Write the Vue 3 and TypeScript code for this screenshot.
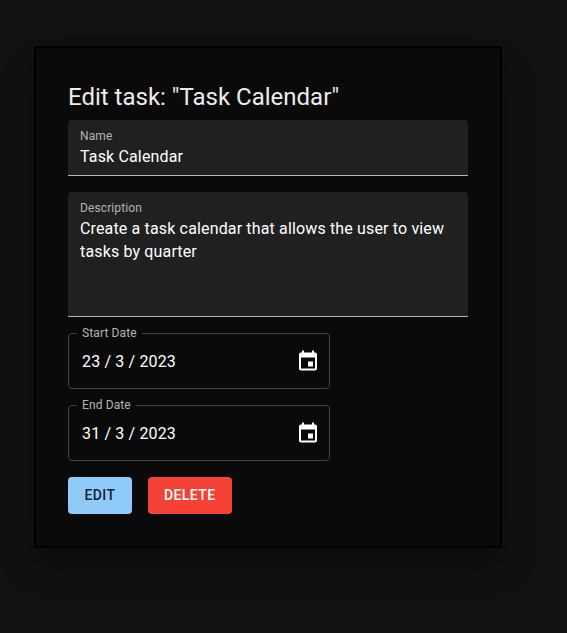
<script setup lang="ts">
import { reactive, ref } from 'vue'

interface DateField {
  id: string
  label: string
  value: string
}

const title = ref('Task Calendar')
const name = ref('Task Calendar')
const description = ref('Create a task calendar that allows the user to view tasks by quarter')
const dates = reactive<DateField[]>([
  { id: 'start', label: 'Start Date', value: '23 / 3 / 2023' },
  { id: 'end', label: 'End Date', value: '31 / 3 / 2023' },
])
</script>

<template>
  <div class="backdrop">
    <form class="modal" @submit.prevent>
      <h2 class="title">Edit task: "{{ title }}"</h2>

      <div class="filled">
        <label class="label" for="name">Name</label>
        <input id="name" v-model="name" class="control" type="text" />
      </div>

      <div class="filled">
        <label class="label" for="description">Description</label>
        <textarea id="description" v-model="description" class="control" rows="4" spellcheck="false"></textarea>
      </div>

      <fieldset v-for="field in dates" :key="field.id" class="outlined">
        <legend class="legend">{{ field.label }}</legend>
        <div class="date-row">
          <input v-model="field.value" class="control" type="text" :aria-label="field.label" />
          <button class="icon-button" type="button" aria-label="Choose date">
            <svg viewBox="0 -0.5 24 24" width="24" height="24">
              <path
                fill="currentColor"
                d="M17 12h-5v5h5v-5zM16 1v2H8V1H6v2H5c-1.11 0-1.99.9-1.99 2L3 19c0 1.1.89 2 2 2h14c1.1 0 2-.9 2-2V5c0-1.1-.9-2-2-2h-1V1h-2zm3 18H5V8h14v11z"
              />
            </svg>
          </button>
        </div>
      </fieldset>

      <div class="actions">
        <button class="button primary" type="submit">Edit</button>
        <button class="button danger" type="button">Delete</button>
      </div>
    </form>
  </div>
</template>

<style>
body {
  background: #121212;
}
</style>

<style scoped>
.backdrop {
  box-sizing: border-box;
  height: 633px;
  padding: 46px 65px 0 34px;
  overflow: hidden;
  background: #121212;
  color: #fff;
  font-family: Roboto, 'Liberation Sans', sans-serif;
}

.modal {
  box-sizing: border-box;
  display: flex;
  flex-direction: column;
  height: 502px;
  padding: 32px;
  border: 2px solid #000;
  background: #0a0a0a;
  box-shadow:
    0 11px 15px -7px rgba(0, 0, 0, 0.2),
    0 24px 36px 1px rgba(0, 0, 0, 0.12),
    0 9px 42px 5px rgba(0, 0, 0, 0.11);
}

.title {
  margin: 0 0 6px;
  color: #ececec;
  font-size: 24px;
  font-weight: 400;
  line-height: 34px;
}

.filled {
  display: flex;
  flex-direction: column;
  box-sizing: border-box;
  margin-bottom: 16px;
  padding: 7px 12px 7px;
  border-bottom: 1px solid #b5b5b5;
  border-radius: 4px 4px 0 0;
  background: #202020;
}

.label {
  height: 18px;
  color: #b4b4b4;
  font-size: 12px;
  line-height: 19px;
  letter-spacing: 0.1125px;
}

.control {
  display: block;
  box-sizing: border-box;
  width: 100%;
  min-width: 0;
  height: 23px;
  margin: 0;
  padding: 0;
  border: 0;
  outline: 0;
  background: none;
  color: #fff;
  font: 400 16px/23px Roboto, 'Liberation Sans', sans-serif;
  letter-spacing: 0.15px;
}

textarea.control {
  height: 92px;
  resize: none;
  overflow: hidden;
}

.outlined {
  box-sizing: border-box;
  width: 262px;
  height: 61px;
  min-width: 0;
  margin: -5px 0 16px;
  padding: 0 8px;
  border: 1px solid #444;
  border-radius: 4px;
}

.legend {
  height: 11px;
  padding: 0 5px;
  color: #b4b4b4;
  font-size: 12px;
  line-height: 11px;
  letter-spacing: 0.1125px;
}

.date-row {
  display: flex;
  align-items: center;
  height: 44px;
  padding: 0 1px 0 5px;
}

.icon-button {
  display: flex;
  flex: none;
  padding: 0;
  border: 0;
  background: none;
  color: #fff;
}

.actions {
  display: flex;
  gap: 16px;
}

.button {
  box-sizing: border-box;
  height: 37px;
  padding: 6px 16px;
  border: 0;
  border-radius: 4px;
  font: 500 14px/24.5px Roboto, 'Liberation Sans', sans-serif;
  letter-spacing: 0.4px;
  text-transform: uppercase;
}

.primary {
  min-width: 64px;
  background: #90caf9;
  color: rgba(0, 0, 0, 0.87);
}

.danger {
  background: #f44336;
  color: #fff;
}
</style>
